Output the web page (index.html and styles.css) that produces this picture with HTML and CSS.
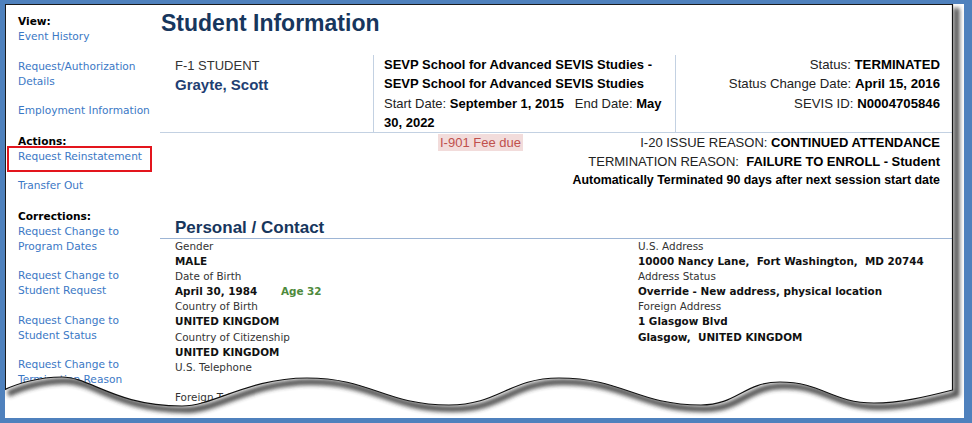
FILE: index.html
```html
<!DOCTYPE html>
<html lang="en">
<head>
  <meta charset="UTF-8" />
  <meta name="viewport" content="width=device-width, initial-scale=1" />
  <title>Student Information</title>
  <link rel="stylesheet" href="styles.css">
</head>
<body>
  <div class="frame">
    <div class="paper">
      <aside class="sidebar">
        <div class="nav-group">
          <div class="nav-head">View:</div>
          <a class="nav-link" href="#">Event History</a>
          <a class="nav-link" href="#">Request/Authorization Details</a>
          <a class="nav-link" href="#">Employment Information</a>
        </div>
        <div class="nav-group">
          <div class="nav-head">Actions:</div>
          <a class="nav-link marked" href="#">Request Reinstatement</a>
          <a class="nav-link" href="#">Transfer Out</a>
        </div>
        <div class="nav-group">
          <div class="nav-head">Corrections:</div>
          <a class="nav-link" href="#">Request Change to Program Dates</a>
          <a class="nav-link" href="#">Request Change to Student Request</a>
          <a class="nav-link" href="#">Request Change to Student Status</a>
          <a class="nav-link" href="#">Request Change to Termination Reason</a>
          <a class="nav-link" href="#">Request Change to Education Level</a>
        </div>
      </aside>

      <main class="main">
        <h1 class="page-title">Student Information</h1>

        <div class="summary">
          <div class="summary-col who">
            <div class="student-type">F-1 STUDENT</div>
            <div class="student-name">Grayte, Scott</div>
          </div>
          <div class="summary-col school">
            <b>SEVP School for Advanced SEVIS Studies - SEVP School for Advanced SEVIS Studies</b>
            <div>Start Date: <b>September 1, 2015</b>&nbsp;&nbsp; End Date: <b>May 30, 2022</b></div>
          </div>
          <div class="summary-col status">
            <div>Status: <b>TERMINATED</b></div>
            <div>Status Change Date: <b>April 15, 2016</b></div>
            <div>SEVIS ID: <b>N0004705846</b></div>
          </div>
        </div>

        <div class="status-row">
          <div class="fee"><span class="fee-due">I-901 Fee due</span></div>
          <div class="reasons">
            <div>I-20 ISSUE REASON: <b>CONTINUED ATTENDANCE</b></div>
            <div>TERMINATION REASON:&nbsp; <b>FAILURE TO ENROLL - Student</b></div>
            <div class="auto-note">Automatically Terminated 90 days after next session start date</div>
          </div>
        </div>

        <h2 class="section-title">Personal / Contact</h2>
        <div class="personal">
          <div class="personal-col">
            <div class="label">Gender</div>
            <div class="value">MALE</div>
            <div class="label">Date of Birth</div>
            <div class="value">April 30, 1984 <span class="age">Age 32</span></div>
            <div class="label">Country of Birth</div>
            <div class="value">UNITED KINGDOM</div>
            <div class="label">Country of Citizenship</div>
            <div class="value">UNITED KINGDOM</div>
            <div class="label">U.S. Telephone</div>
            <div class="value">&nbsp;</div>
            <div class="label">Foreign Telephone</div>
            <div class="value">&nbsp;</div>
          </div>
          <div class="personal-col">
            <div class="label">U.S. Address</div>
            <div class="value">10000 Nancy Lane,&nbsp; Fort Washington,&nbsp; MD 20744</div>
            <div class="label">Address Status</div>
            <div class="value">Override - New address, physical location</div>
            <div class="label">Foreign Address</div>
            <div class="value">1 Glasgow Blvd</div>
            <div class="value">Glasgow,&nbsp; UNITED KINGDOM</div>
          </div>
        </div>
      </main>
    </div>

    <!-- torn paper edge drawn over the bottom of the page -->
    <svg class="torn-edge" viewBox="0 0 972 423" aria-hidden="true">
      <defs>
        <clipPath id="outside">
          <path d="M952.5,0 L952.5,390 C925,397 900,403 874,403 C832,403 822,382 780,382 C744,382 737,405 701,405 C637,405 623,378 559,378 C509,378 499,405 449,405 C385,405 371,378 307,378 C248,378 214,406 182,406 C115,406 90,377 62,377 C38,377 16,384 4,390 L0,390 L0,423 L972,423 L972,0 Z"/>
        </clipPath>
        <filter id="soft">
          <feGaussianBlur stdDeviation="2"/>
        </filter>
      </defs>
      <path class="edge-fill" d="M952.5,0 L952.5,390 C925,397 900,403 874,403 C832,403 822,382 780,382 C744,382 737,405 701,405 C637,405 623,378 559,378 C509,378 499,405 449,405 C385,405 371,378 307,378 C248,378 214,406 182,406 C115,406 90,377 62,377 C38,377 16,384 4,390 L0,390 L0,423 L972,423 L972,0 Z"/>
      <g clip-path="url(#outside)">
        <path class="edge-shadow" transform="translate(4 4)" filter="url(#soft)" d="M952.5,4 L952.5,390 C925,397 900,403 874,403 C832,403 822,382 780,382 C744,382 737,405 701,405 C637,405 623,378 559,378 C509,378 499,405 449,405 C385,405 371,378 307,378 C248,378 214,406 182,406 C115,406 90,377 62,377 C38,377 16,384 4,390"/>
      </g>
      <path class="edge-line" d="M952.5,4 L952.5,390 C925,397 900,403 874,403 C832,403 822,382 780,382 C744,382 737,405 701,405 C637,405 623,378 559,378 C509,378 499,405 449,405 C385,405 371,378 307,378 C248,378 214,406 182,406 C115,406 90,377 62,377 C38,377 16,384 4,390"/>
    </svg>
  </div>
</body>
</html>
```

FILE: styles.css
```css
html, body {
  margin: 0;
  padding: 0;
}
body {
  background: #4f81bd;
  padding: 4px 8px 5px 5px;
  font-family: "Liberation Sans", Arial, sans-serif;
  color: #222;
}
.frame {
  position: relative;
  height: 414px;
  background: #fff;
  overflow: hidden;
}
.paper {
  display: flex;
  width: 948px;
  height: 100%;
  box-sizing: border-box;
  border-top: 1px solid #1b1b1b;
  border-left: 1px solid #1b1b1b;
  overflow: hidden;
}

/* left navigation */
.sidebar {
  width: 154px;
  flex: none;
  box-sizing: border-box;
  padding: 8px 2px 0 12px;
  font-family: "DejaVu Sans", Verdana, sans-serif;
  font-size: 10.6px;
}
.nav-head {
  font-weight: bold;
  color: #000;
  line-height: 16px;
}
.nav-link {
  display: block;
  color: #3b78c5;
  text-decoration: none;
  line-height: 15px;
  margin-bottom: 14.5px;
}
.nav-link.marked {
  position: relative;
}
.nav-link.marked::after {
  content: "";
  position: absolute;
  left: -11px;
  top: -3px;
  width: 145px;
  height: 26px;
  border: 2px solid #e3151d;
  box-sizing: border-box;
}

/* main */
.main {
  flex: 1;
  min-width: 0;
  padding-top: 4px;
}
.page-title {
  margin: 0;
  padding-left: 1px;
  font-size: 23px;
  line-height: 28px;
  font-weight: bold;
  color: #17365d;
}
.summary {
  display: flex;
  margin-top: 18px;
  height: 77px;
  border-bottom: 1px solid #c3d1e2;
  font-size: 13px;
  line-height: 19.3px;
}
.summary-col {
  box-sizing: border-box;
}
.summary b { color: #000; }
.who {
  width: 213px;
  padding: 1px 0 0 15px;
}
.student-type { color: #333; }
.student-name {
  font-size: 15px;
  font-weight: bold;
  color: #1f3f73;
}
.school {
  width: 302px;
  padding-left: 10px;
  border-left: 1px solid #c3d1e2;
}
.status {
  flex: 1;
  padding-right: 13px;
  text-align: right;
  border-left: 1px solid #c3d1e2;
  font-size: 13.2px;
}
.status-row {
  display: flex;
  font-size: 13px;
  line-height: 19px;
}
.fee {
  margin-left: 278px;
}
.fee-due {
  color: #c0504d;
  background: #f2dcdb;
  padding: 1px 2px;
}
.reasons {
  margin-left: auto;
  padding-right: 13px;
  text-align: right;
}
.reasons b { color: #000; }
.auto-note {
  font-weight: bold;
  color: #000;
  font-size: 12.4px;
}
.section-title {
  margin: 28px 0 0;
  padding-left: 15px;
  font-size: 17px;
  line-height: 20px;
  color: #17365d;
  border-bottom: 1px solid #9db5d5;
}
.personal {
  display: grid;
  grid-template-columns: 463px 1fr;
  padding-left: 15px;
  font-family: "DejaVu Sans", Verdana, sans-serif;
  font-size: 10.4px;
  line-height: 15.1px;
}
.label { color: #333; }
.value {
  font-weight: bold;
  color: #111;
}
.age {
  margin-left: 20px;
  color: #4e8a3c;
}

/* torn bottom edge */
.torn-edge {
  position: absolute;
  left: -5px;
  top: -4px;
  width: 972px;
  height: 423px;
  pointer-events: none;
}
.edge-fill { fill: #fff; }
.edge-shadow {
  fill: none;
  stroke: #333;
  stroke-width: 6;
  opacity: 0.85;
}
.edge-line {
  fill: none;
  stroke: #111;
  stroke-width: 1.2;
}
```
